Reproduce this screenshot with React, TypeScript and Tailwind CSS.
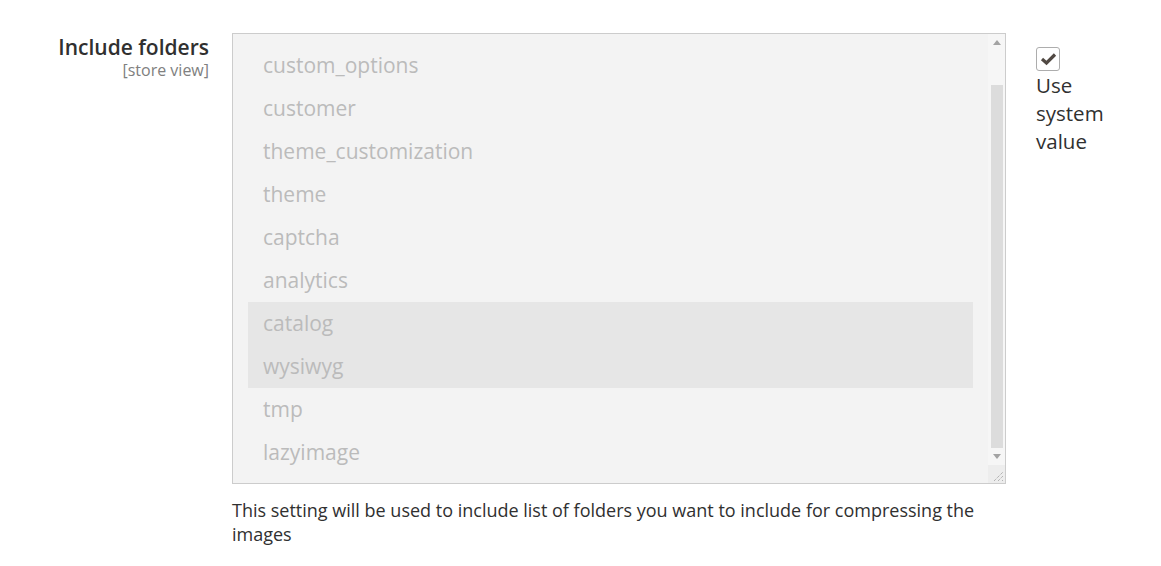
import React from 'react';

const folders = [
  'custom_options',
  'customer',
  'theme_customization',
  'theme',
  'captcha',
  'analytics',
  'catalog',
  'wysiwyg',
  'tmp',
  'lazyimage',
];

const selected = ['catalog', 'wysiwyg'];

const App: React.FC = () => {
  return (
    <div className="min-h-[566px] bg-white font-['Open_Sans',sans-serif] text-[#303030]">
      <div className="flex pt-[33px]">
        {/* label column */}
        <div className="w-[209px] text-right pt-[1px]">
          <div className="text-[21px] font-semibold leading-[26px] text-[#303030]">Include folders</div>
          <div className="text-[16px] leading-[20px] text-[#808080]">[store view]</div>
        </div>

        {/* control column */}
        <div className="ml-[23px] w-[774px]">
          <div className="flex h-[451px] border border-[#cccccc] bg-[#f3f3f3]">
            <div className="flex-1 overflow-hidden pl-[15px] pr-[15px] pt-[10px]">
              {folders.map((f) => (
                <div
                  key={f}
                  className={`flex h-[43px] items-center pl-[15px] text-[21px] text-[#bbbbbb] ${
                    selected.includes(f) ? 'bg-[#e6e6e6]' : ''
                  }`}
                >
                  {f}
                </div>
              ))}
            </div>

            {/* scrollbar */}
            <div className="flex w-[17px] flex-col bg-[#f6f6f6]">
              <div className="flex h-[17px] items-center justify-center">
                <svg width="8" height="5" viewBox="0 0 8 5">
                  <path d="M0 5 L4 0 L8 5 Z" fill="#a3a3a3" />
                </svg>
              </div>
              <div className="flex flex-1 justify-center pt-[34px]">
                <div className="w-[12px] bg-[#dcdcdc]" />
              </div>
              <div className="flex h-[17px] items-center justify-center">
                <svg width="8" height="5" viewBox="0 0 8 5">
                  <path d="M0 0 L4 5 L8 0 Z" fill="#a3a3a3" />
                </svg>
              </div>
              <div className="flex h-[18px] items-end justify-end bg-[#ededed] pb-[2px] pr-[2px]">
                <svg width="10" height="10" viewBox="0 0 10 10">
                  <path d="M1 10 L10 1 M5 10 L10 5 M9 10 L10 9" stroke="#9a9a9a" strokeWidth="1" strokeDasharray="1 1" />
                </svg>
              </div>
            </div>
          </div>

          <p className="mt-[14px] text-[18px] leading-[24px] text-[#303030]">
            This setting will be used to include list of folders you want to include for compressing the images
          </p>
        </div>

        {/* use system value */}
        <div className="ml-[30px] w-[90px] pt-[14px]">
          <div className="flex h-[24px] w-[24px] items-center justify-center rounded-[3px] border border-[#adadad] bg-white">
            <svg width="17" height="14" viewBox="0 0 17 14">
              <path d="M2 7 L6.5 11 L15 2.5" fill="none" stroke="#514943" strokeWidth="3.2" />
            </svg>
          </div>
          <div className="text-[20.5px] leading-[28px] text-[#303030]">Use system value</div>
        </div>
      </div>
    </div>
  );
};

export default App;
